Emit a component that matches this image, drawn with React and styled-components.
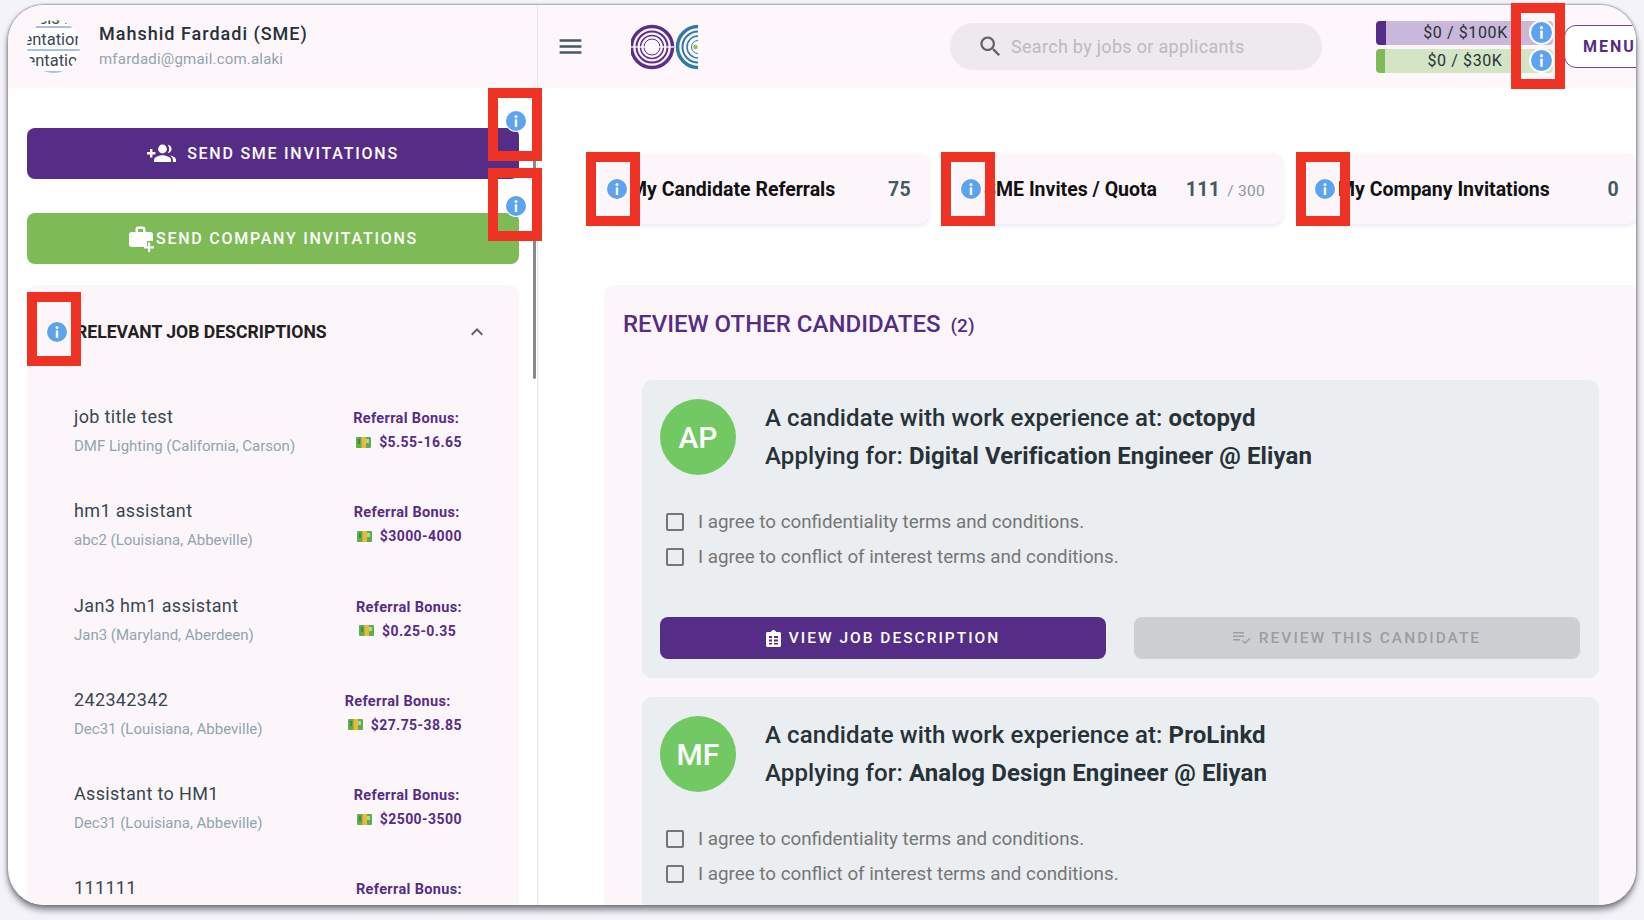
import React from 'react'
import styled, { createGlobalStyle } from 'styled-components'

const PURPLE = '#562d86'
const GREEN = '#7eba56'

const GlobalStyle = createGlobalStyle`
  html, body {
    margin: 0;
    padding: 0;
    background: #f4f3f9;
    overflow: hidden;
  }
  * {
    box-sizing: border-box;
  }
  body {
    font-family: Roboto, "Liberation Sans", sans-serif;
  }
`

const Stage = styled.div`
  position: relative;
  width: 1644px;
  height: 920px;
  padding: 5px 8px 15px;
  overflow: hidden;
`

const Window = styled.div`
  display: flex;
  width: 1628px;
  height: 900px;
  background: #fff;
  border-radius: 36px;
  overflow: hidden;
  box-shadow: 0 5px 6px rgba(60, 60, 70, 0.6), 0 -1px 1px rgba(120, 120, 130, 0.3), -1px 0 3px rgba(90, 90, 100, 0.35), 1px 0 3px rgba(90, 90, 100, 0.35);
`

const Sidebar = styled.aside`
  position: relative;
  flex: 0 0 530px;
  height: 100%;
  border-right: 1px solid #e4e4e8;
  overflow: hidden;
`

const SidebarHead = styled.div`
  display: flex;
  align-items: center;
  gap: 19px;
  height: 83px;
  padding: 0 0 0 19px;
  background: #fdf6fb;
`

const AvatarImage = styled.div`
  display: flex;
  flex-direction: column;
  align-items: center;
  width: 53px;
  height: 53px;
  border-radius: 50%;
  background: #fff;
  overflow: hidden;
  font-size: 16.5px;
  line-height: 19px;
  color: #3c4654;
  white-space: nowrap;
`

const AvatarText = styled.div`
  flex: none;
  margin-top: ${(p) => p.$top}px;
  transform: translateX(${(p) => p.$shift || 0}px);
`

const AvatarLine = styled.div`
  flex: none;
  width: 100%;
  height: 2px;
  margin-top: ${(p) => p.$top}px;
  background: #a9c1df;
`

const UserName = styled.div`
  margin-top: -2px;
  font-size: 18px;
  font-weight: 500;
  letter-spacing: 1px;
  color: #263238;
`

const UserEmail = styled.div`
  margin-top: 6px;
  font-size: 15px;
  letter-spacing: 0.2px;
  color: #90a4ae;
`

const SidebarBody = styled.div`
  padding: 40px 18px 0 19px;
`

const ActionWrap = styled.div`
  position: relative;
  margin-bottom: ${(p) => p.$gap}px;
`

const ActionButton = styled.button`
  display: flex;
  align-items: center;
  justify-content: center;
  gap: ${(p) => p.$gap}px;
  width: 100%;
  height: 51px;
  border: none;
  border-radius: 8px;
  background: ${(p) => p.$bg};
  color: #fff;
  font-family: inherit;
  font-size: 16px;
  font-weight: 500;
  letter-spacing: 1.75px;
`

const InfoSpot = styled.span`
  position: absolute;
  top: ${(p) => p.$top}px;
  left: ${(p) => p.$left}px;
  display: flex;
  width: ${(p) => p.$size}px;
  height: ${(p) => p.$size}px;
  border-radius: 50%;
  background: #fff;
  box-shadow: 0 0 0 ${(p) => p.$ring}px rgba(255, 255, 255, 0.95);
`

const JobPanel = styled.section`
  height: 640px;
  border-radius: 10px 10px 0 0;
  background: #fcf6fb;
  overflow: hidden;
`

const JobPanelHead = styled.div`
  position: relative;
  display: flex;
  align-items: center;
  justify-content: space-between;
  height: 94px;
  padding: 0 30px 0 49px;
  font-size: 17.6px;
  font-weight: 700;
  color: #212121;
`

const JobRow = styled.div`
  display: flex;
  align-items: flex-start;
  justify-content: space-between;
  height: 94.3px;
  padding: 27px 57px 0 47px;
`

const JobTitle = styled.div`
  font-size: 18px;
  letter-spacing: 0.35px;
  color: #37474f;
`

const JobPlace = styled.div`
  margin-top: 10px;
  font-size: 15px;
  color: #90a4ae;
`

const BonusBlock = styled.div`
  display: flex;
  flex-direction: column;
  align-items: flex-start;
  min-width: 106px;
  margin-top: 4px;
  color: ${PURPLE};
  font-size: 14.5px;
  font-weight: 700;
  letter-spacing: 0.35px;
`

const BonusValue = styled.div`
  display: flex;
  align-items: center;
  gap: 8px;
  margin-top: 7px;
  padding-left: 3px;
  font-size: 14px;
  letter-spacing: 0.45px;
`

const Main = styled.main`
  flex: 1;
  min-width: 0;
  height: 100%;
  overflow: hidden;
`

const TopBar = styled.header`
  display: flex;
  align-items: center;
  height: 83px;
  padding-left: 18px;
  background: #fdf6fb;
`

const MenuIcon = styled.svg`
  flex: none;
  width: 29px;
  height: 29px;
  fill: #455a64;
`

const LogoMark = styled.svg`
  flex: none;
  width: 67px;
  height: 46px;
  margin-left: 46px;
`

const SearchBox = styled.div`
  flex: none;
  display: flex;
  align-items: center;
  gap: 7px;
  width: 372px;
  height: 47px;
  margin-left: 252px;
  padding-left: 27px;
  border-radius: 24px;
  background: #eee9ee;
  color: #bdb9bd;
  font-size: 18px;
  letter-spacing: 0.3px;
`

const SearchIcon = styled.svg`
  width: 27px;
  height: 27px;
  fill: #5f6368;
`

const Budgets = styled.div`
  flex: none;
  display: flex;
  flex-direction: column;
  gap: 4px;
  width: 177px;
  margin-left: 54px;
`

const BudgetBar = styled.div`
  position: relative;
  height: 24px;
  padding-right: 8px;
  border-radius: 4px;
  border-left: ${(p) => p.$edge} solid ${(p) => p.$color};
  background: ${(p) => p.$bg};
  color: #263238;
  font-size: 16px;
  line-height: 24px;
  letter-spacing: 0.6px;
  text-align: center;
`

const MenuButton = styled.button`
  flex: none;
  width: 100px;
  height: 43px;
  margin-left: 11px;
  padding: 0 0 0 18px;
  border: 1px solid #6b45a0;
  border-radius: 12px;
  background: #fff;
  color: ${PURPLE};
  font-family: inherit;
  font-size: 16px;
  font-weight: 700;
  letter-spacing: 2px;
  text-align: left;
`

const StatRow = styled.div`
  display: flex;
  gap: 27px;
  margin-top: 65px;
  padding-left: 64px;
`

const StatCard = styled.div`
  position: relative;
  flex: none;
  display: flex;
  align-items: center;
  justify-content: space-between;
  width: 327px;
  height: 71px;
  padding: 2px 18px 0 28px;
  border-radius: 10px;
  background: #fcf6fb;
  box-shadow: 0 2px 4px rgba(150, 170, 210, 0.25);
`

const StatLabel = styled.div`
  font-size: 19.5px;
  font-weight: 700;
  color: #111;
`

const StatValue = styled.div`
  color: #455a64;
  font-size: 19.5px;
  font-weight: 700;
  letter-spacing: 0.3px;
`

const StatTotal = styled.span`
  margin-left: 7px;
  color: #8d979d;
  font-size: 15.5px;
  font-weight: 400;
`

const ReviewPanel = styled.section`
  height: 640px;
  margin: 61px 0 0 66px;
  padding: 20px 37px 0 38px;
  border-radius: 10px 0 0 0;
  background: #fcf6fb;
  overflow: hidden;
`

const ReviewTitle = styled.h2`
  display: flex;
  align-items: baseline;
  gap: 10px;
  height: 38px;
  margin: 0 0 37px -19px;
  color: ${PURPLE};
  font-size: 24px;
  font-weight: 500;
  line-height: 38px;
`

const ReviewCount = styled.span`
  font-size: 19px;
`

const CandidateCard = styled.article`
  margin-bottom: 19px;
  padding: 19px 19px 19px 18px;
  border-radius: 10px;
  background: #ebeef1;
`

const CandidateHead = styled.div`
  display: flex;
  align-items: center;
  gap: 29px;
`

const Initials = styled.div`
  flex: none;
  display: flex;
  align-items: center;
  justify-content: center;
  width: 76px;
  height: 76px;
  border-radius: 50%;
  background: #72c963;
  color: #fff;
  font-size: 30px;
  font-weight: 500;
`

const CandidateLine = styled.div`
  color: #263238;
  font-size: 24px;
  font-weight: 500;
  line-height: 38px;
  letter-spacing: 0.1px;
  b {
    font-weight: 700;
  }
`

const AgreeList = styled.div`
  margin-top: 29px;
`

const AgreeRow = styled.label`
  display: flex;
  align-items: center;
  gap: 14px;
  height: 35.5px;
  padding-left: 6px;
  color: #757575;
  font-size: 18.8px;
`

const CheckBox = styled.span`
  flex: none;
  width: 18px;
  height: 18px;
  border: 2px solid #757575;
  border-radius: 2px;
`

const CardActions = styled.div`
  display: flex;
  gap: 28px;
  margin-top: 42px;
`

const CardButton = styled.button`
  flex: 1;
  display: flex;
  align-items: center;
  justify-content: center;
  gap: 8px;
  height: 42px;
  border: none;
  border-radius: 8px;
  background: ${(p) => (p.disabled ? '#cdd0d3' : PURPLE)};
  color: ${(p) => (p.disabled ? '#9b9da0' : '#fff')};
  font-family: inherit;
  font-size: 15.5px;
  font-weight: 500;
  letter-spacing: 2px;
`

// red rectangles sit on top of the screenshot, so they are placed by page coordinates
const RedMark = styled.div`
  position: absolute;
  left: ${(p) => p.$x}px;
  top: ${(p) => p.$y}px;
  width: ${(p) => p.$w}px;
  height: ${(p) => p.$h}px;
  border: 10px solid #ee3224;
  pointer-events: none;
`

const ScrollThumb = styled.div`
  position: absolute;
  top: 83px;
  left: 525px;
  width: 3px;
  height: 291px;
  border-radius: 2px;
  background: #8a8a8a;
`

const InfoIcon = ({ size = 20 }) => (
  <svg width={size} height={size} viewBox="0 0 20 20">
    <circle cx="10" cy="10" r="10" fill="#5da3ef" />
    <circle cx="10" cy="5.4" r="1.5" fill="#fff" />
    <rect x="8.8" y="8.2" width="2.4" height="7.8" rx="0.6" fill="#fff" />
  </svg>
)

const Info = ({ top, left, size = 20, ring = 1 }) => (
  <InfoSpot $top={top} $left={left} $size={size} $ring={ring}>
    <InfoIcon size={size} />
  </InfoSpot>
)

const GroupAddIcon = () => (
  <svg width="30" height="24" viewBox="0 0 30 24" fill="#fff">
    <path d="M0 10h3V7h2.4v3h3v2.4h-3v3H3v-3H0z" />
    <circle cx="15.5" cy="7" r="4.4" />
    <path d="M7 20v-2.2c0-3 5.6-4.6 8.5-4.6s8.5 1.6 8.5 4.6V20z" />
    <path d="M20.6 2.8c2.3.2 4 2 4 4.2s-1.7 4-4 4.2c1-1.2 1.5-2.6 1.5-4.2s-.5-3-1.5-4.2z" />
    <path d="M23 13.4c3 .6 6 2 6 4.4V20h-3.2v-2.4c0-1.7-1.1-3.1-2.8-4.2z" />
  </svg>
)

const CaseAddIcon = () => (
  <svg width="26" height="26" viewBox="0 0 26 26" fill="#fff">
    <path d="M7.500 6V3C7.500 1.600 8.600 .5 10 .5h5C16.400 .5 17.500 1.600 17.500 3v3h5C23.900 6 25 7.100 25 8.500V15h-6v6H3.500C2.100 21 1 19.900 1 18.500v-10C1 7.100 2.100 6 3.500 6zm2.500 0h5V3h-5z" />
    <path d="M20 16.500h2.200v3.800H26v2.200h-3.800V26H20v-3.500h-4v-2.200h4z" />
  </svg>
)

const MoneyIcon = () => (
  <svg width="15" height="13" viewBox="0 0 15 13">
    <rect y="1" width="15" height="11" rx="1" fill="#5cae4f" />
    <rect x="5.500" y="1" width="4.500" height="11" fill="#f2b632" />
    <rect x="10" y="3" width="3" height="4" fill="#a9dc9c" />
    <rect x="2" y="3" width="2" height="5" fill="#3e8c3c" />
  </svg>
)

const ClipboardIcon = () => (
  <svg width="15" height="17" viewBox="0 0 15 17">
    <path fill="#fff" d="M1.500 2H5C5.300 .9 6.300 0 7.500 0S9.700 .9 10 2h3.500C14.300 2 15 2.700 15 3.500v12c0 .8-.7 1.500-1.500 1.500h-12C.7 17 0 16.300 0 15.500v-12C0 2.700 .7 2 1.500 2z" />
    <path fill={PURPLE} d="M3 6h3v2H3zM8 6h4v2H8zM3 9.500h3v2H3zM8 9.500h4v2H8zM3 13h3v1.500H3zM8 13h4v1.500H8z" />
  </svg>
)

const ReviewListIcon = () => (
  <svg width="18" height="14" viewBox="0 0 18 14" fill="#9b9da0">
    <path d="M0 1h11v1.400H0zM0 4.500h11v1.400H0zM0 8h7v1.400H0z" />
    <path d="M9 10l1-1 2 2.200L16.500 6.500l1 1-5.500 5.800z" />
  </svg>
)

// logo: concentric rings, the right one is cut by the image edge
const Logo = () => (
  <LogoMark viewBox="0 0 67 46">
    <g fill="none" stroke="#5b2d8e">
      <circle cx="21" cy="23" r="20.500" strokeWidth="3.500" />
      <circle cx="21" cy="23" r="15.500" strokeWidth="2" />
      <circle cx="21" cy="23" r="11.500" strokeWidth="1.500" />
      <circle cx="21" cy="23" r="8" strokeWidth="1" />
    </g>
    <rect x="0" y="22.300" width="43" height="1.300" fill="#fff" />
    <g fill="none" stroke="#2d7ba6">
      <circle cx="67" cy="23" r="20.500" strokeWidth="3.500" />
      <circle cx="67" cy="23" r="15.500" strokeWidth="2" />
      <circle cx="67" cy="23" r="11" strokeWidth="1.500" />
      <circle cx="67" cy="23" r="6.500" strokeWidth="1" />
    </g>
    <circle cx="64.500" cy="23" r="2.200" fill="#8cc63f" />
  </LogoMark>
)

// the last row is cut by the window, only its first line shows
const jobs = [
  { title: 'job title test', place: 'DMF Lighting (California, Carson)', bonus: '$5.55-16.65' },
  { title: 'hm1 assistant', place: 'abc2 (Louisiana, Abbeville)', bonus: '$3000-4000' },
  { title: 'Jan3 hm1 assistant', place: 'Jan3 (Maryland, Aberdeen)', bonus: '$0.25-0.35' },
  { title: '242342342', place: 'Dec31 (Louisiana, Abbeville)', bonus: '$27.75-38.85' },
  { title: 'Assistant to HM1', place: 'Dec31 (Louisiana, Abbeville)', bonus: '$2500-3500' },
  { title: '111111' },
]

const stats = [
  { label: 'My Candidate Referrals', value: '75' },
  { label: 'SME Invites / Quota', value: '111', total: '/ 300' },
  { label: 'My Company Invitations', value: '0' },
]

const candidates = [
  { initials: 'AP', company: 'octopyd', role: 'Digital Verification Engineer @ Eliyan' },
  { initials: 'MF', company: 'ProLinkd', role: 'Analog Design Engineer @ Eliyan' },
]

const marks = [
  { x: 488, y: 88, w: 54, h: 73 },
  { x: 488, y: 168, w: 54, h: 73 },
  { x: 27, y: 292, w: 54, h: 74 },
  { x: 586, y: 152, w: 54, h: 74 },
  { x: 941, y: 152, w: 54, h: 74 },
  { x: 1296, y: 152, w: 54, h: 74 },
  { x: 1511, y: 3, w: 54, h: 86 },
]

export default function App() {
  return (
    <>
      <GlobalStyle />
      <Stage>
        <Window>
          <Sidebar>
            <SidebarHead>
              <AvatarImage>
                <AvatarText $top={-11}>sis .</AvatarText>
                <AvatarLine $top={-2} />
                <AvatarText $top={1.5}>entation</AvatarText>
                <AvatarLine $top={0} />
                <AvatarText $top={0.5} $shift={3}>entation</AvatarText>
                <AvatarLine $top={1} />
              </AvatarImage>
              <div>
                <UserName>Mahshid Fardadi (SME)</UserName>
                <UserEmail>mfardadi@gmail.com.alaki</UserEmail>
              </div>
            </SidebarHead>
            <SidebarBody>
              <ActionWrap $gap={34}>
                <ActionButton $bg={PURPLE} $gap={10}>
                  <GroupAddIcon />
                  SEND SME INVITATIONS
                </ActionButton>
                <Info top={-17} left={479} />
              </ActionWrap>
              <ActionWrap $gap={21}>
                <ActionButton $bg={GREEN} $gap={2}>
                  <CaseAddIcon />
                  SEND COMPANY INVITATIONS
                </ActionButton>
                <Info top={-17} left={479} />
              </ActionWrap>
              <JobPanel>
                <JobPanelHead>
                  RELEVANT JOB DESCRIPTIONS
                  <svg width="24" height="24" viewBox="0 0 24 24" fill="#616161">
                    <path d="M12 8l-6 6 1.410 1.410L12 10.830l4.590 4.580L18 14z" />
                  </svg>
                  <Info top={37} left={20} />
                </JobPanelHead>
                {jobs.map((job) => (
                  <JobRow key={job.title}>
                    <div>
                      <JobTitle>{job.title}</JobTitle>
                      {job.place && <JobPlace>{job.place}</JobPlace>}
                    </div>
                    <BonusBlock>
                      <div>Referral Bonus:</div>
                      {job.bonus && (
                        <BonusValue>
                          <MoneyIcon />
                          {job.bonus}
                        </BonusValue>
                      )}
                    </BonusBlock>
                  </JobRow>
                ))}
              </JobPanel>
            </SidebarBody>
            <ScrollThumb />
          </Sidebar>
          <Main>
            <TopBar>
              <MenuIcon viewBox="0 0 24 24">
                <path d="M3 18h18v-2H3v2zm0-5h18v-2H3v2zm0-7v2h18V6H3z" />
              </MenuIcon>
              <Logo />
              <SearchBox>
                <SearchIcon viewBox="0 0 24 24">
                  <path d="M15.500 14h-.79l-.28-.27C15.410 12.590 16 11.110 16 9.500 16 5.910 13.090 3 9.500 3S3 5.910 3 9.500 5.910 16 9.500 16c1.610 0 3.090-.59 4.230-1.570l.27.28v.79l5 4.990L20.490 19l-4.990-5zm-6 0C7.010 14 5 11.990 5 9.500S7.010 5 9.500 5 14 7.010 14 9.500 11.990 14 9.500 14z" />
                </SearchIcon>
                Search by jobs or applicants
              </SearchBox>
              <Budgets>
                <BudgetBar $edge="10px" $color={PURPLE} $bg="#c9b8d9">
                  $0 / $100K
                  <Info top={1} left={145} size={21} ring={2} />
                </BudgetBar>
                <BudgetBar $edge="9px" $color={GREEN} $bg="#d4e5c5">
                  $0 / $30K
                  <Info top={1} left={146} size={21} ring={2} />
                </BudgetBar>
              </Budgets>
              <MenuButton>MENU</MenuButton>
            </TopBar>
            <StatRow>
              {stats.map((stat) => (
                <StatCard key={stat.label}>
                  <StatLabel>{stat.label}</StatLabel>
                  <StatValue>
                    {stat.value}
                    {stat.total && <StatTotal>{stat.total}</StatTotal>}
                  </StatValue>
                  <Info top={26} left={5} />
                </StatCard>
              ))}
            </StatRow>
            <ReviewPanel>
              <ReviewTitle>
                REVIEW OTHER CANDIDATES
                <ReviewCount>(2)</ReviewCount>
              </ReviewTitle>
              {candidates.map((c) => (
                <CandidateCard key={c.initials}>
                  <CandidateHead>
                    <Initials>{c.initials}</Initials>
                    <div>
                      <CandidateLine>
                        A candidate with work experience at: <b>{c.company}</b>
                      </CandidateLine>
                      <CandidateLine>
                        Applying for: <b>{c.role}</b>
                      </CandidateLine>
                    </div>
                  </CandidateHead>
                  <AgreeList>
                    <AgreeRow>
                      <CheckBox />
                      I agree to confidentiality terms and conditions.
                    </AgreeRow>
                    <AgreeRow>
                      <CheckBox />
                      I agree to conflict of interest terms and conditions.
                    </AgreeRow>
                  </AgreeList>
                  <CardActions>
                    <CardButton>
                      <ClipboardIcon />
                      VIEW JOB DESCRIPTION
                    </CardButton>
                    <CardButton disabled>
                      <ReviewListIcon />
                      REVIEW THIS CANDIDATE
                    </CardButton>
                  </CardActions>
                </CandidateCard>
              ))}
            </ReviewPanel>
          </Main>
        </Window>
        {marks.map((m) => (
          <RedMark key={`${m.x}-${m.y}`} $x={m.x} $y={m.y} $w={m.w} $h={m.h} />
        ))}
      </Stage>
    </>
  )
}
